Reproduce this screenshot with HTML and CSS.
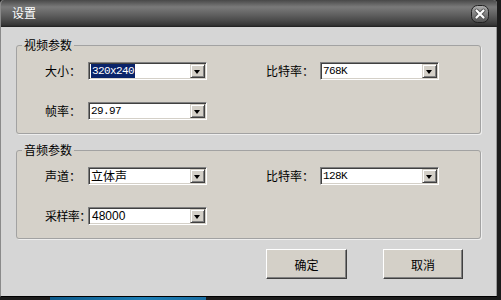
FILE: index.html
```html
<!DOCTYPE html>
<html lang="zh-CN">
  <head>
    <meta charset="utf-8" />
    <title>设置</title>
    <link rel="stylesheet" href="styles.css">
  </head>
  <body>
    <div class="window">
      <div class="titlebar">
        <span class="title">设置</span>
        <button class="close-button" aria-label="关闭">
          <svg width="18" height="18" viewBox="0 0 18 18">
            <defs>
              <linearGradient id="closeFill" x1="0" y1="0" x2="0" y2="1">
                <stop offset="0" stop-color="#b0b0b0" />
                <stop offset="0.5" stop-color="#808080" />
                <stop offset="1" stop-color="#505050" />
              </linearGradient>
            </defs>
            <rect x="0.5" y="0.5" width="17" height="17" rx="6" fill="url(#closeFill)" stroke="#222" />
            <path d="M5.5 5.5 L12.5 12.5 M12.5 5.5 L5.5 12.5" stroke="#555" stroke-width="4" stroke-linecap="round" />
            <path d="M5.5 5.5 L12.5 12.5 M12.5 5.5 L5.5 12.5" stroke="#fff" stroke-width="2.2" stroke-linecap="round" />
          </svg>
        </button>
      </div>

      <div class="content">
        <fieldset class="group">
          <legend>视频参数</legend>
          <div class="fields">
            <span class="label">大小<span class="colon">：</span></span>
            <div class="combo mono"><span class="value selected">320x240</span><span class="drop"></span></div>
            <span class="spacer"></span>
            <span class="label">比特率<span class="colon">：</span></span>
            <div class="combo mono"><span class="value">768K</span><span class="drop"></span></div>

            <span class="label">帧率<span class="colon">：</span></span>
            <div class="combo mono"><span class="value">29.97</span><span class="drop"></span></div>
          </div>
        </fieldset>

        <fieldset class="group">
          <legend>音频参数</legend>
          <div class="fields">
            <span class="label">声道<span class="colon">：</span></span>
            <div class="combo"><span class="value">立体声</span><span class="drop"></span></div>
            <span class="spacer"></span>
            <span class="label">比特率<span class="colon">：</span></span>
            <div class="combo mono"><span class="value">128K</span><span class="drop"></span></div>

            <span class="label tight">采样率<span class="colon">：</span></span>
            <div class="combo sans"><span class="value">48000</span><span class="drop"></span></div>
          </div>
        </fieldset>

        <div class="actions">
          <button class="btn">确定</button>
          <button class="btn">取消</button>
        </div>
      </div>
    </div>
    <div class="desktop-strip"></div>
  </body>
</html>
```

FILE: styles.css
```css
* {
  box-sizing: border-box;
}

body {
  margin: 0;
  background: #1c1c1c;
  font-family: "Noto Sans CJK SC", "Liberation Sans", sans-serif;
  font-size: 12px;
  color: #000;
}

.window {
  width: 497px;
  height: 297px;
  display: flex;
  flex-direction: column;
  background: #d6d6d6;
  border-left: 1px solid #8a8a8a;
  border-bottom: 1px solid #000;
  border-radius: 4px 4px 0 0;
  overflow: hidden;
}

.titlebar {
  height: 27px;
  flex: none;
  display: flex;
  align-items: center;
  justify-content: space-between;
  padding: 0 8px 0 11px;
  background: linear-gradient(#484848 0, #7a7a7a 7px, #666 13px, #4c4c4c 20px, #363636 25px, #1e1e1e 27px);
}

.title {
  color: #fff;
  font-size: 12px;
  line-height: 14px;
  margin-top: -1px;
}

.close-button {
  width: 18px;
  height: 18px;
  padding: 0;
  border: none;
  background: none;
  display: block;
  margin-top: 1px;
}

.close-button svg {
  display: block;
}

.content {
  flex: 1;
  display: flex;
  flex-direction: column;
  padding: 11px 15px 0 15px;
  border-right: 1px solid #9a9a9a;
}

.group {
  margin: 0;
  padding: 0;
  min-width: 0;
  border: 1px solid #a2a2a2;
  border-radius: 3px;
  background: #d5d1c9;
  box-shadow: 1px 1px 0 #eee;
}

.group + .group {
  margin-top: 9px;
}

.group legend {
  margin-left: 5px;
  padding: 0 2px;
  line-height: 14px;
  font-size: 12px;
}

.fields {
  display: grid;
  grid-template-columns: 43px 119px 59px 54px 119px;
  grid-auto-rows: 18px;
  row-gap: 22px;
  align-items: center;
  padding: 10px 0 13px 28px;
}

.label {
  line-height: 14px;
  white-space: nowrap;
}

.label.tight {
  letter-spacing: -0.6px;
}

/* centred full-width colon, like the old Windows UI font */
.colon {
  font-family: "Noto Sans CJK TC", "Noto Sans CJK SC", sans-serif;
}

.combo {
  height: 18px;
  display: flex;
  align-items: stretch;
  background: #fff;
  border-top: 1px solid #808080;
  border-left: 1px solid #808080;
  border-right: 1px solid #fff;
  border-bottom: 1px solid #fff;
  box-shadow: inset 1px 1px 0 #404040, inset -1px -1px 0 #d4d0c8;
  padding: 1px;
}

.value {
  flex: 1;
  line-height: 14px;
  padding-left: 1px;
  white-space: nowrap;
}

.mono .value {
  font-family: "Liberation Mono", monospace;
  font-size: 11px;
  letter-spacing: -0.6px;
}

.sans .value {
  font-family: "Liberation Sans", sans-serif;
  font-size: 12px;
  padding-left: 2px;
}

.value.selected {
  flex: none;
  margin-left: 1px;
  padding: 0 1px;
  background: #0a246a;
  color: #fff;
}

.combo .selected + .drop {
  margin-left: auto;
}

.drop {
  width: 15px;
  flex: none;
  position: relative;
  background: #d4d0c8;
  border-top: 1px solid #d4d0c8;
  border-left: 1px solid #d4d0c8;
  border-right: 1px solid #404040;
  border-bottom: 1px solid #404040;
  box-shadow: inset 1px 1px 0 #fff, inset -1px -1px 0 #808080;
}

.drop::after {
  content: "";
  position: absolute;
  left: 3px;
  top: 5px;
  border-left: 3.5px solid transparent;
  border-right: 3.5px solid transparent;
  border-top: 4px solid #000;
}

.actions {
  display: flex;
  justify-content: flex-end;
  gap: 36px;
  margin-top: 10px;
  padding-right: 18px;
}

.btn {
  width: 81px;
  height: 30px;
  padding: 0;
  font-family: inherit;
  font-size: 12px;
  background: #d4d0c8;
  border-top: 1px solid #fff;
  border-left: 1px solid #fff;
  border-right: 1px solid #404040;
  border-bottom: 1px solid #404040;
  box-shadow: inset -1px -1px 0 #808080;
}

.btn + .btn {
  width: 80px;
}

.desktop-strip {
  width: 156px;
  height: 3px;
  margin-left: 50px;
  background: linear-gradient(90deg, #0e5a8a, #1d7fb6 60%, #1a6ea2);
}
```
